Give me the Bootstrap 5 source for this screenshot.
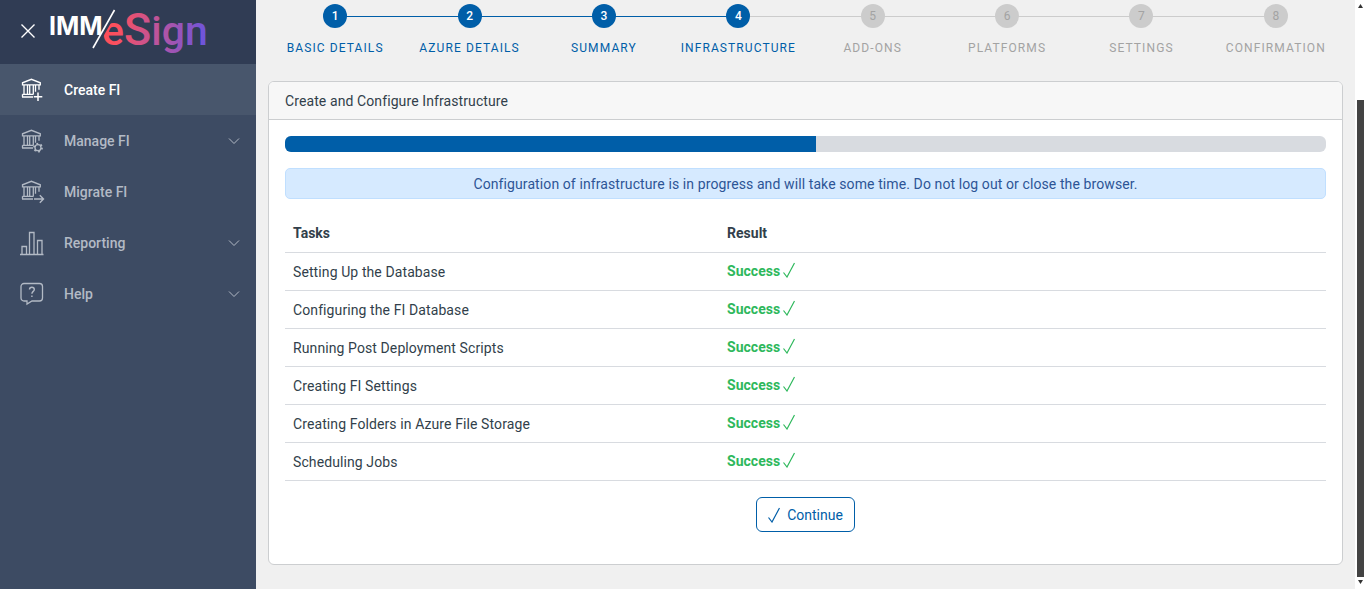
<!DOCTYPE html>
<html lang="en">
<head>
<meta charset="utf-8">
<meta name="viewport" content="width=device-width, initial-scale=1">
<title>IMM eSign - Create FI</title>
<link href="https://cdn.jsdelivr.net/npm/bootstrap@5.3.0/dist/css/bootstrap.min.css" rel="stylesheet">
<style>
  :root { --brand: #005ea8; --ink: #323f4b; --muted: #a3a3a3; }
  body { font-family: Roboto, sans-serif; font-size: 14px; line-height: 21px; color: var(--ink); background: #f0f0f0; }
  .sidebar { width: 256px; background: #3d4b63; }
  .brand-bar { height: 64px; background: #303c54; }
  .close-btn { width: 16px; height: 16px; margin-left: 20px; }
  .side-link { height: 51px; padding: 1px 16px 0 20px; color: #b3bac5; font-weight: 500; text-decoration: none; }
  .side-link:hover { color: #fff; }
  .side-link.current { background: #48566c; color: #fff; }
  .side-link .glyph { width: 24px; height: 24px; margin-right: 20px; overflow: visible; }
  .stroke { fill: none; stroke: currentColor; }
  .workspace { padding: 0 12px; }
  .steps { padding: 4px 0 24px; margin: 0; list-style: none; }
  .step { flex: 1 1 0; position: relative; text-align: center; font-size: 12px; line-height: 18px; letter-spacing: 1.1px; color: var(--muted); text-transform: uppercase; }
  .step .dot { width: 24px; height: 24px; margin: 0 auto 11px; border-radius: 50%; background: #ccc; position: relative; z-index: 1; letter-spacing: 0; line-height: 25px; }
  .step:not(:last-child)::after { content: ""; position: absolute; left: 50%; top: 12px; width: 100%; height: 1px; background: #ccc; }
  .step.done { color: var(--brand); }
  .step.done .dot { background: var(--brand); color: #fff; font-weight: 500; }
  .step.done:not(.now)::after { background: var(--brand); }
  .panel { border-color: #ccced0; border-radius: 6px; color: var(--ink); letter-spacing: 0.1px; }
  .panel .card-header { padding: 9px 16px 7px; background: #f7f7f7; border-color: #ccced0; }
  .panel .card-body { padding: 16px 16px 32px; }
  .progress { --bs-progress-bg: #d8dbe0; --bs-progress-bar-bg: var(--brand); }
  .note { padding: 5px 4px 3px; color: #2d5596; background: #d6eaff; border: 1px solid #c0dfff; border-radius: 5px; }
  .tasks { --bs-table-color: var(--ink); border-color: #d8dbe0; }
  .tasks td { height: 38px; padding: 9px 8px 7px; }
  .tasks th { height: 37px; padding: 6px 8px 8px; letter-spacing: 0; }
  .tasks td.ok { padding: 8px; color: #2eb85c; font-weight: 700; letter-spacing: 0; }
  .ok svg { margin: 1px 0 0 3px; }
  .continue-btn { --bs-btn-color: var(--brand); --bs-btn-border-color: var(--brand); --bs-btn-hover-bg: var(--brand); --bs-btn-hover-color: #fff; padding: 7px 11px 5px; font-size: 14px; line-height: 21px; border-radius: 6px; }
  .continue-btn svg { margin-right: 7px; }
  .scroll-track { width: 11px; background: #fff; padding: 4px 2px 5px; }
  .scroll-space { flex: 92 1 0; }
  .scroll-thumb { flex: 478 1 0; width: 7px; background: #434343; margin-bottom: 3px; }
  .up, .down { width: 5px; height: 4px; margin: 0 1px; flex: none; }
  .wordmark { width: 168px; height: 60px; }
</style>
</head>
<body>
<svg class="d-none" aria-hidden="true">
  <symbol id="bank" viewBox="0 0 24 24">
    <path class="stroke" stroke-width="1.300" d="M2.500 4.800V6.800h17.800V4.800L11.400 1.300zM4 6.800v9.500M7.500 6.800v9.500M9.700 6.800v9.500M13.300 6.800v9.500M15.500 6.800v7M19 6.800v5M2.500 16.300h11M2 19h11M2.500 19v-2.700"/>
  </symbol>
  <symbol id="tick" viewBox="0 0 12 16"><path class="stroke" stroke-width="1.200" d="M.5 10.500 4 15 11.500 1"/></symbol>
  <symbol id="caret" viewBox="0 0 12 8"><path class="stroke" d="M1 1.500l5 5 5-5"/></symbol>
</svg>
<div class="d-flex min-vh-100">
  <aside class="sidebar flex-shrink-0">
    <div class="brand-bar d-flex">
      <button class="close-btn btn p-0 border-0 align-self-center d-flex text-white" type="button" aria-label="Close menu">
        <svg width="16" height="16" viewBox="0 0 16 16"><path class="stroke" stroke-width="1.400" d="M1.500 .5l13 13M14.500 .5l-13 13"/></svg>
      </button>
      <a href="#" class="ms-2 ps-1" aria-label="IMM eSign">
        <svg class="wordmark" viewBox="48 0 168 60">
          <defs><linearGradient id="fade" gradientUnits="userSpaceOnUse" x1="104" y1="20" x2="206" y2="34"><stop offset="0" stop-color="#ff4f57"/><stop offset=".15" stop-color="#fa5060"/><stop offset=".55" stop-color="#b854a0"/><stop offset="1" stop-color="#6c55dc"/></linearGradient></defs>
          <text x="49" y="35" font-family="Inter, sans-serif" font-size="25" font-weight="700" fill="#fff">IMM</text>
          <text x="102" y="45" font-family="Roboto, sans-serif" font-size="41" font-weight="500" fill="url(#fade)">e<tspan font-size="45">S</tspan>ign</text>
          <path d="M95 48 116.500 10" stroke="#303c54" stroke-width="3"/>
          <path d="M93 48 114.500 10" stroke="#fff" stroke-width="1.600"/>
        </svg>
      </a>
    </div>
    <nav aria-label="Main">
      <a href="#" class="side-link current d-flex align-items-center">
        <svg class="glyph" viewBox="0 0 24 24"><use href="#bank"/><path class="stroke" stroke-width="1.500" d="M18 14.500v8.500M13.800 18.700h8.500"/></svg>Create FI</a>
      <a href="#" class="side-link d-flex align-items-center">
        <svg class="glyph" viewBox="0 0 24 24"><use href="#bank"/><g class="stroke"><circle cx="18" cy="18.700" r="3" stroke-width="1.300"/><path stroke-width="1.800" stroke-dasharray="1.800 2.390" d="M22 18.700a4 4 0 1 1-8 0 4 4 0 1 1 8 0"/></g></svg>Manage FI
        <svg class="ms-auto" width="12" height="8"><use href="#caret"/></svg></a>
      <a href="#" class="side-link d-flex align-items-center">
        <svg class="glyph" viewBox="0 0 24 24"><use href="#bank"/><path class="stroke" stroke-width="1.400" d="M14 19h9.500M19.800 15.300l3.700 3.700-3.700 3.700"/></svg>Migrate FI</a>
      <a href="#" class="side-link d-flex align-items-center">
        <svg class="glyph" viewBox="0 0 24 24"><path class="stroke" stroke-width="1.300" d="M0 23.500h23.500M2 23V15.500h4.500V23M9.500 23V1.500h4.500V23M17.500 23V9.500H22V23"/></svg>Reporting
        <svg class="ms-auto" width="12" height="8"><use href="#caret"/></svg></a>
      <a href="#" class="side-link d-flex align-items-center">
        <svg class="glyph" viewBox="0 0 24 24"><path class="stroke" stroke-width="1.300" d="M4 1.500h15.500a3 3 0 0 1 3 3V16a3 3 0 0 1-3 3H12l-5 3v-3H4a3 3 0 0 1-3-3V4.500a3 3 0 0 1 3-3z"/><path class="stroke" stroke-width="1.400" d="M9.500 7.500c0-3 4.800-3 4.800 0 0 1.900-2.400 1.900-2.400 4.200M11.900 13.600v1.500"/></svg>Help
        <svg class="ms-auto" width="12" height="8"><use href="#caret"/></svg></a>
    </nav>
  </aside>
  <main class="workspace flex-grow-1">
    <ol class="steps d-flex">
      <li class="step done"><div class="dot">1</div>Basic Details</li>
      <li class="step done"><div class="dot">2</div>Azure Details</li>
      <li class="step done"><div class="dot">3</div>Summary</li>
      <li class="step done now" aria-current="step"><div class="dot">4</div>Infrastructure</li>
      <li class="step"><div class="dot">5</div>Add-ons</li>
      <li class="step"><div class="dot">6</div>Platforms</li>
      <li class="step"><div class="dot">7</div>Settings</li>
      <li class="step"><div class="dot">8</div>Confirmation</li>
    </ol>
    <section class="card panel mb-4">
      <div class="card-header">Create and Configure Infrastructure</div>
      <div class="card-body">
        <div class="progress mb-3" role="progressbar" aria-label="Configuration progress" aria-valuenow="51" aria-valuemin="0" aria-valuemax="100"><div class="progress-bar" style="width: 51%"></div></div>
        <div class="note text-center mb-3" role="status">Configuration of infrastructure is in progress and will take some time. Do not log out or close the browser.</div>
        <table class="table tasks align-middle mb-3">
          <colgroup><col style="width: 41.7%"><col></colgroup>
          <thead><tr><th scope="col">Tasks</th><th scope="col">Result</th></tr></thead>
          <tbody>
            <tr><td>Setting Up the Database</td><td class="ok"><span class="d-flex">Success<svg width="12" height="16"><use href="#tick"/></svg></span></td></tr>
            <tr><td>Configuring the FI Database</td><td class="ok"><span class="d-flex">Success<svg width="12" height="16"><use href="#tick"/></svg></span></td></tr>
            <tr><td>Running Post Deployment Scripts</td><td class="ok"><span class="d-flex">Success<svg width="12" height="16"><use href="#tick"/></svg></span></td></tr>
            <tr><td>Creating FI Settings</td><td class="ok"><span class="d-flex">Success<svg width="12" height="16"><use href="#tick"/></svg></span></td></tr>
            <tr><td>Creating Folders in Azure File Storage</td><td class="ok"><span class="d-flex">Success<svg width="12" height="16"><use href="#tick"/></svg></span></td></tr>
            <tr><td>Scheduling Jobs</td><td class="ok"><span class="d-flex">Success<svg width="12" height="16"><use href="#tick"/></svg></span></td></tr>
          </tbody>
        </table>
        <div class="d-flex justify-content-center">
          <button type="button" class="btn continue-btn d-flex align-items-center"><svg width="12" height="16"><use href="#tick"/></svg>Continue</button>
        </div>
      </div>
    </section>
  </main>
  <div class="scroll-track d-flex flex-column flex-shrink-0" aria-hidden="true">
    <svg class="up" viewBox="0 0 5 4"><path d="M0 4 2.500 0 5 4z" fill="#333"/></svg>
    <div class="scroll-space"></div>
    <div class="scroll-thumb"></div>
    <svg class="down" viewBox="0 0 5 4"><path d="M0 0 2.500 4 5 0z" fill="#333"/></svg>
  </div>
</div>
<script src="https://cdn.jsdelivr.net/npm/bootstrap@5.3.0/dist/js/bootstrap.bundle.min.js"></script>
</body>
</html>
